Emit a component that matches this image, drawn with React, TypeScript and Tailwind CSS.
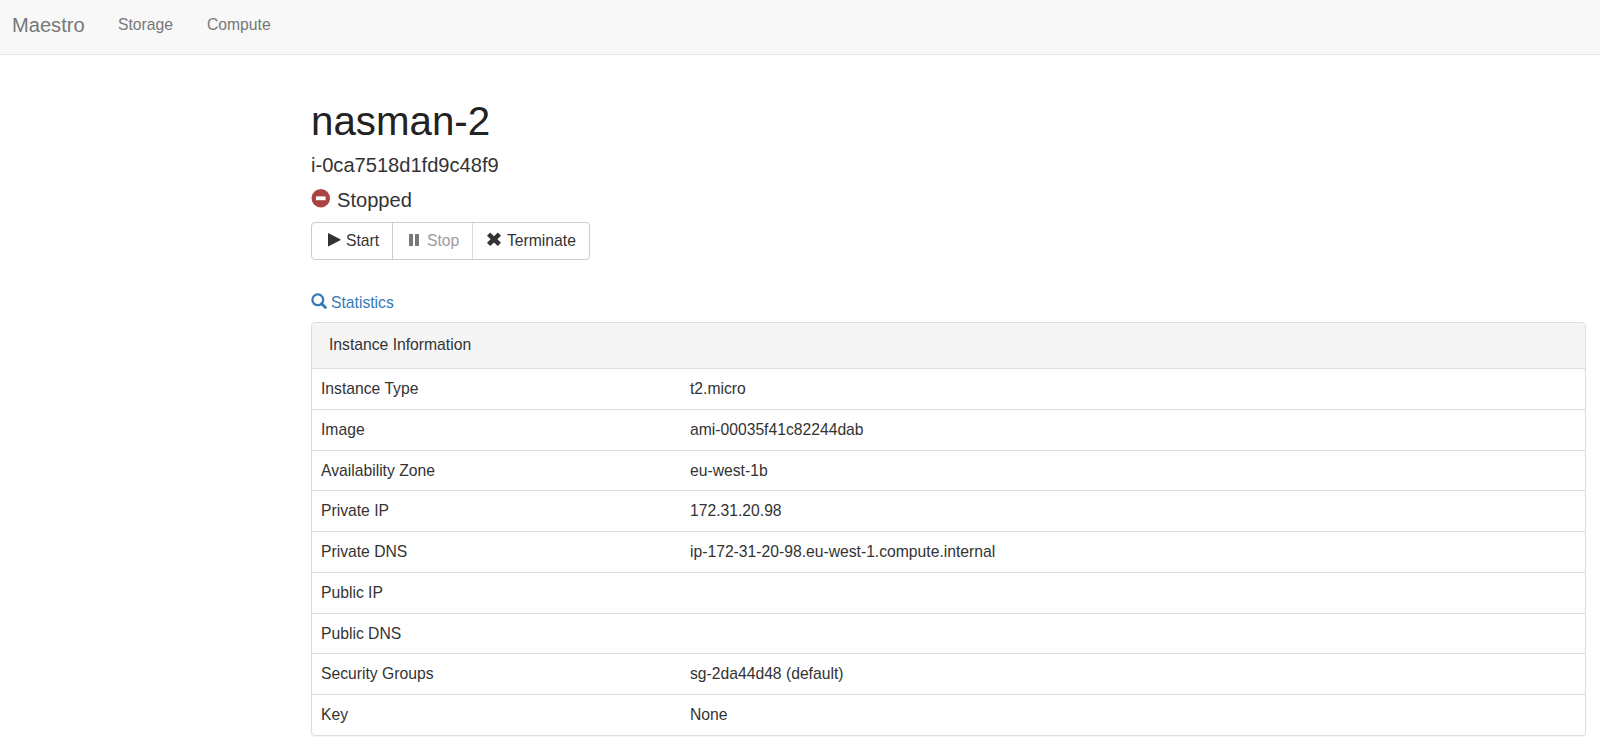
import React from "react";

const rows: [string, string][] = [
  ["Instance Type", "t2.micro"],
  ["Image", "ami-00035f41c82244dab"],
  ["Availability Zone", "eu-west-1b"],
  ["Private IP", "172.31.20.98"],
  ["Private DNS", "ip-172-31-20-98.eu-west-1.compute.internal"],
  ["Public IP", ""],
  ["Public DNS", ""],
  ["Security Groups", "sg-2da44d48 (default)"],
  ["Key", "None"],
];

function Navbar() {
  return (
    <nav className="flex h-[55px] items-start border-b border-[#e7e7e7] bg-[#f8f8f8] text-[#777]">
      <a className="ml-3 mt-[13px] w-[106px] text-[20.1px] leading-[24px]">Maestro</a>
      <a className="mt-[14px] w-[89px] text-[15.7px] leading-[22px]">Storage</a>
      <a className="mt-[14px] text-[15.7px] leading-[22px]">Compute</a>
    </nav>
  );
}

function Actions() {
  return (
    <div className="mt-[10px] flex h-[38px] w-[279px] rounded-[4px] border border-[#ccc] text-[15.7px] leading-[36px] text-[#333]">
      <button className="flex w-[81px] items-center border-r border-[#ccc] pl-4">
        <svg className="-mt-[2px] mr-[5px] h-4 w-[13px]" viewBox="0 0 13 16" fill="currentColor">
          <path d="M0 1.5 Q0 .8 .7 1.2 L12.3 7.2 Q13 7.7 12.3 8.2 L.7 14.3 Q0 14.7 0 14Z" />
        </svg>
        Start
      </button>
      <button className="flex w-[80px] items-center border-r border-[#ccc] pl-4 opacity-65" disabled>
        <svg className="-mt-[2px] mr-[8px] h-4 w-[10px]" viewBox="0 0 10 16" fill="currentColor">
          <path d="M0 2h4v12H0zM6 2h4v12H6z" />
        </svg>
        <span className="text-[#666]">Stop</span>
      </button>
      <button className="flex items-center pl-[14px]">
        <svg className="-mt-[2px] mr-[6px] h-4 w-[14px]" viewBox="0 0 14 16" fill="currentColor">
          <path d="M3.2 .6 7 4.2 10.8 .6 14 3.8 10.4 7.2 14 10.8 10.8 14 7 10.4 3.2 14 0 10.8 3.6 7.2 0 3.8Z" />
        </svg>
        Terminate
      </button>
    </div>
  );
}

function InstancePanel() {
  return (
    <section className="mr-[14px] mt-[8px] rounded-[4px] border border-[#ddd] shadow-[0_1px_1px_rgba(0,0,0,0.05)]">
      <div className="h-[45px] rounded-t-[3px] bg-[#f5f5f5] pl-[17px] pt-[11px] leading-[22px]">
        Instance Information
      </div>
      {rows.map(([label, value]) => (
        <div key={label} className="flex h-[40.78px] border-t border-[#ddd] pl-[9px] pt-[9px] leading-[22px]">
          <div className="w-[369px]">{label}</div>
          <div>{value}</div>
        </div>
      ))}
    </section>
  );
}

export default function App() {
  return (
    <div className="h-[739px] overflow-hidden bg-white font-['Liberation_Sans',Arial,sans-serif] text-[15.7px] text-[#333]">
      <Navbar />
      <main className="pl-[311px] pt-[43px]">
        <h1 className="text-[40.3px] leading-[48px] text-[#222]">nasman-2</h1>
        <h4 className="mt-[7px] text-[20.1px] leading-[24px]">i-0ca7518d1fd9c48f9</h4>
        <h4 className="mt-[11px] flex text-[20.1px] leading-[24px]">
          <svg className="mr-[7px] mt-px h-[19px] w-[19px]" viewBox="0 0 19 19">
            <circle cx="9.8" cy="9.2" r="9.2" fill="#a94442" />
            <rect x="5" y="7.4" width="9.6" height="3.8" fill="#fff" />
          </svg>
          Stopped
        </h4>
        <Actions />
        <a className="mt-[32px] flex text-[#337ab7] leading-[22px]">
          <svg className="mr-1 mt-px h-4 w-4" viewBox="0 0 16 16" fill="none" stroke="currentColor">
            <circle cx="6.8" cy="6.8" r="5.4" strokeWidth="2.3" />
            <path d="m10.8 10.8 3.6 3.6" strokeWidth="2.8" strokeLinecap="round" />
          </svg>
          Statistics
        </a>
        <InstancePanel />
      </main>
    </div>
  );
}
